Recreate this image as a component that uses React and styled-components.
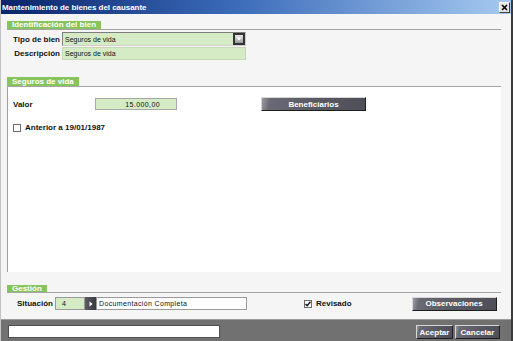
import React from 'react';
import styled, { createGlobalStyle } from 'styled-components';

let Global = createGlobalStyle`
  html, body { margin: 0; padding: 0; background: #f4f4f4; }
  body { font-family: "Liberation Sans", Arial, sans-serif; }
`;

let Window = styled.div`
  width: 513px;
  height: 341px;
  box-sizing: border-box;
  display: flex;
  flex-direction: column;
  background: #f5f5f5;
  border-left: 1px solid #c4c4c4;
  border-right: 2px solid #3c3c3c;
  overflow: hidden;
`;

let TitleBar = styled.div`
  height: 14px;
  display: flex;
  align-items: center;
  justify-content: space-between;
  padding: 0 1px 0 1px;
  background: linear-gradient(to right, #0a246a 0%, #3a6ab8 45%, #a6caf0 100%);
`;

let Title = styled.span`
  color: white;
  font-weight: bold;
  font-size: 8px;
  letter-spacing: -0.05px;
`;

let CloseBox = styled.div`
  width: 11px;
  height: 11px;
  box-sizing: border-box;
  background: #e4e4e4;
  border: 1px solid;
  border-color: #ffffff #404040 #404040 #ffffff;
  display: flex;
  align-items: center;
  justify-content: center;
  margin-top: 1px;
`;

let Body = styled.div`
  flex: 1;
  display: flex;
  flex-direction: column;
  padding: 0 10px 0 6px;
`;

let SectionHead = styled.div`
  display: flex;
  align-items: flex-end;
  border-bottom: 1px solid #a4a4a4;
  margin-top: ${(props) => props.top || 0}px;
`;

let Tab = styled.div`
  height: ${(props) => props.h || 8}px;
  line-height: ${(props) => props.h || 8}px;
  background: #88c45c;
  color: white;
  font-weight: bold;
  font-size: 8px;
  padding: 0 5px;
  white-space: nowrap;
`;

let FieldGrid = styled.div`
  display: grid;
  grid-template-columns: 55px 184px;
  grid-template-rows: 14px 13px;
  row-gap: 1px;
  margin-top: 2px;
  align-items: center;
`;

let Label = styled.span`
  font-size: 8px;
  font-weight: bold;
  color: #111;
  text-align: ${(props) => (props.right ? 'right' : 'left')};
  padding-right: ${(props) => (props.right ? 2 : 0)}px;
  white-space: nowrap;
  ${(props) => props.w && `width: ${props.w}px; flex-shrink: 0;`}
`;

let GreenField = styled.div`
  height: 100%;
  box-sizing: border-box;
  background: #d5ebc5;
  border: 1px solid;
  border-color: #7e7e7e #d0d0d0 #d0d0d0 #7e7e7e;
  display: flex;
  align-items: center;
  justify-content: ${(props) => (props.right ? 'flex-end' : 'space-between')};
  padding: 0 ${(props) => (props.right ? 16 : 0)}px 0 2px;
  font-size: 7px;
  color: #111;
`;

let DropButton = styled.div`
  width: 12px;
  height: 12px;
  box-sizing: border-box;
  background: #333;
  display: flex;
  align-items: center;
  justify-content: center;
`;

let DropInner = styled.div`
  width: 8px;
  height: 8px;
  background: linear-gradient(#e8e8e8, #9a9a9a);
  display: flex;
  align-items: center;
  justify-content: center;
`;

let Panel = styled.div`
  flex: 1;
  background: #ffffff;
  border-left: 1px solid #a0a0a0;
  padding: 10px 0 0 5px;
  display: flex;
  flex-direction: column;
`;

let Row = styled.div`
  display: flex;
  align-items: center;
  height: ${(props) => props.h || 13}px;
  margin-top: ${(props) => props.top || 0}px;
`;

let ValueBox = styled(GreenField)`
  width: 82px;
  height: 12px;
  border-color: #a8a8a8;
  letter-spacing: 0.4px;
  padding-top: 1px;
`;

let DarkButton = styled.div`
  width: ${(props) => props.w}px;
  height: ${(props) => props.h || 14}px;
  box-sizing: border-box;
  margin-left: ${(props) => props.ml || 0}px;
  background: linear-gradient(100deg, #9a9aa4 0%, #6a6a74 8%, #5a5a64 50%, #4e4e58 100%);
  border: 1px solid;
  border-color: #d6d6d6 #1e1e1e #1e1e1e #d6d6d6;
  color: white;
  font-weight: bold;
  font-size: 8px;
  display: flex;
  align-items: center;
  justify-content: center;
`;

let Check = styled.div`
  width: 8px;
  height: 8px;
  box-sizing: border-box;
  background: white;
  border: 1px solid #6c6c6c;
  margin-right: 4px;
  display: flex;
  align-items: center;
  justify-content: center;
`;

let GestionRow = styled.div`
  display: flex;
  align-items: center;
  height: 13px;
  margin: 4px 0 9px 0;
`;

let CodeBox = styled(GreenField)`
  width: 30px;
  height: 13px;
  margin-left: 2px;
  justify-content: flex-start;
  padding-left: 6px;
  border-color: #9a9a9a;
`;

let ArrowButton = styled.div`
  width: 11px;
  height: 13px;
  background: linear-gradient(90deg, #5c5c64, #3a3a40);
  display: flex;
  align-items: center;
  justify-content: center;
`;

let TextBox = styled.div`
  width: 151px;
  height: 13px;
  box-sizing: border-box;
  background: white;
  border: 1px solid #9a9a9a;
  display: flex;
  align-items: center;
  padding-left: 2px;
  font-size: 7px;
  letter-spacing: 0.35px;
  color: #111;
`;

let CheckLabel = styled.div`
  display: flex;
  align-items: center;
  margin-left: ${(props) => props.ml || 0}px;
  font-size: 8px;
  font-weight: bold;
  color: #111;
`;

let Footer = styled.div`
  height: 21px;
  background: #717171;
  border-top: 1px solid #9c9c9c;
  display: flex;
  align-items: center;
  padding: 0 11px 0 7px;
`;

let StatusInput = styled.div`
  width: 212px;
  height: 13px;
  box-sizing: border-box;
  background: white;
  border: 1px solid #505050;
  margin-top: 1px;
`;

let FooterButtons = styled.div`
  margin-left: auto;
  display: flex;
  gap: 2px;
  margin-top: 3px;
`;

let Arrow = ({ dir }) => (
  <svg width="6" height="6" viewBox="0 0 6 6">
    {dir === 'down' ? <polygon points="0.5,1.5 5.5,1.5 3,4.5" fill="#ffffff" /> : <polygon points="1.5,0.5 4.5,3 1.5,5.5" fill="#ffffff" />}
  </svg>
);

function CheckBox({ checked }) {
  return (
    <Check>
      {checked && (
        <svg width="6" height="6" viewBox="0 0 6 6">
          <polyline points="0.5,3 2.2,4.8 5.5,0.8" fill="none" stroke="#111" strokeWidth="1.4" />
        </svg>
      )}
    </Check>
  );
}

export default function App() {
  return (
    <Window>
      <Global />
      <TitleBar>
        <Title>Mantenimiento de bienes del causante</Title>
        <CloseBox>
          <svg width="7" height="7" viewBox="0 0 7 7">
            <path d="M1 1 L6 6 M6 1 L1 6" stroke="#000" strokeWidth="1.6" />
          </svg>
        </CloseBox>
      </TitleBar>
      <Body>
        <SectionHead top={7}>
          <Tab>Identificación del bien</Tab>
        </SectionHead>
        <FieldGrid>
          <Label right>Tipo de bien</Label>
          <GreenField>
            <span>Seguros de vida</span>
            <DropButton>
              <DropInner>
                <Arrow dir="down" />
              </DropInner>
            </DropButton>
          </GreenField>
          <Label right>Descripción</Label>
          <GreenField style={{ borderColor: '#c4d8b8' }}>
            <span>Seguros de vida</span>
          </GreenField>
        </FieldGrid>

        <SectionHead top={17}>
          <Tab h={9}>Seguros de vida</Tab>
        </SectionHead>
        <Panel>
          <Row h={14}>
            <Label w={82}>Valor</Label>
            <ValueBox right>15.000,00</ValueBox>
            <DarkButton w={105} ml={84}>Beneficiarios</DarkButton>
          </Row>
          <Row top={10}>
            <CheckLabel>
              <CheckBox />
              Anterior a 19/01/1987
            </CheckLabel>
          </Row>
        </Panel>

        <SectionHead top={13}>
          <Tab h={7}>Gestión</Tab>
        </SectionHead>
        <GestionRow>
          <Label style={{ marginLeft: 10 }}>Situación</Label>
          <CodeBox>4</CodeBox>
          <ArrowButton>
            <Arrow dir="right" />
          </ArrowButton>
          <TextBox>Documentación Completa</TextBox>
          <CheckLabel ml={57}>
            <CheckBox checked />
            Revisado
          </CheckLabel>
          <DarkButton w={85} ml={60}>Observaciones</DarkButton>
        </GestionRow>
      </Body>
      <Footer>
        <StatusInput />
        <FooterButtons>
          <DarkButton w={37}>Aceptar</DarkButton>
          <DarkButton w={45}>Cancelar</DarkButton>
        </FooterButtons>
      </Footer>
    </Window>
  );
}
